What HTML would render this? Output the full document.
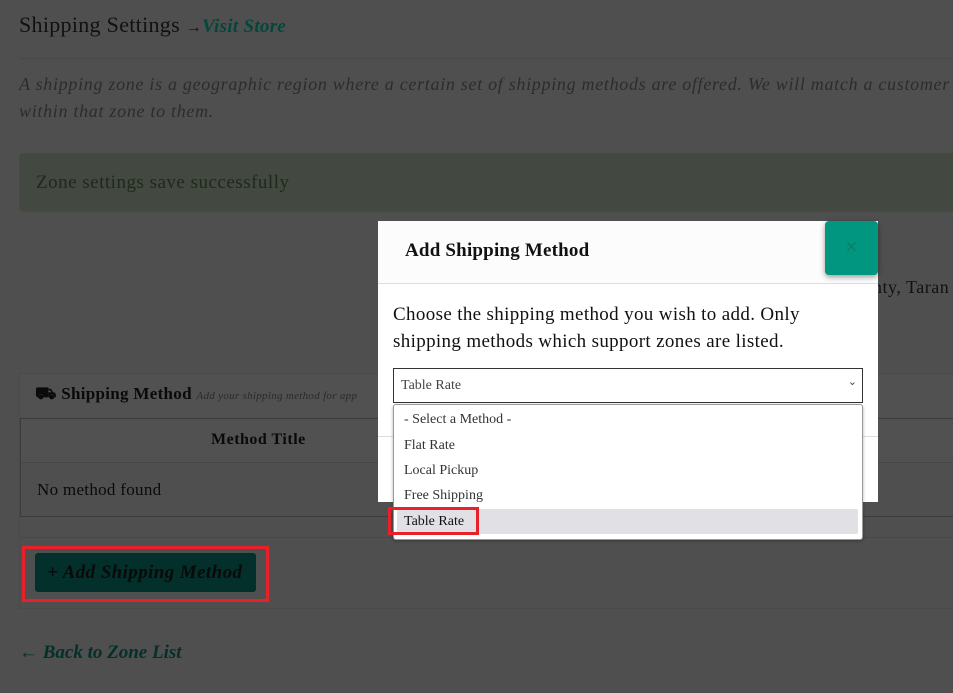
<!DOCTYPE html>
<html><head><style>
*{margin:0;padding:0;box-sizing:border-box}
body{width:953px;height:693px;background:#4f4f4f;position:relative;overflow:hidden;font-family:"Liberation Serif",serif;color:#0a0a0a}
.a{position:absolute;white-space:nowrap}
</style></head><body>
<div class="a" style="left:19px;top:12px;font-size:22px;color:#111;letter-spacing:0.3px">Shipping Settings <span style="font-size:16px">→</span><b style="color:#03473c;font-style:italic;font-size:19px">Visit Store</b></div>
<div class="a" style="left:19px;top:58px;width:934px;height:1px;background:#484848"></div>
<div class="a" style="left:19px;top:71px;font-size:18px;font-style:italic;color:#2c2c2c;line-height:27px;letter-spacing:0.7px">A shipping zone is a geographic region where a certain set of shipping methods are offered. We will match a customer<br>within that zone to them.</div>
<div class="a" style="left:19px;top:153px;width:940px;height:59px;background:#434840;border:1px solid #454b42;border-radius:4px"></div>
<div class="a" style="left:36px;top:172px;font-size:19px;color:#1d2a1a;letter-spacing:0.5px">Zone settings save successfully</div>
<div class="a" style="left:873px;top:277px;font-size:18px;color:#111;letter-spacing:0.5px">nty, Taran</div>
<div class="a" style="left:19px;top:373px;width:940px;height:236px;border:1px solid #4a4a4a;background:#4f4f4f"></div>
<div class="a" style="left:20px;top:374px;width:940px;height:44px;background:#515151"></div>
<div class="a" style="left:35px;top:384px;font-size:17px;font-weight:bold;color:#0a0a0a;letter-spacing:0.3px">&#9951; Shipping Method <span style="font-size:11px;font-weight:normal;font-style:italic;color:#2a2a2a">Add your shipping method for app</span></div>
<div class="a" style="left:20px;top:418px;width:940px;height:99px;border:1px solid #3c3c3c"></div>
<div class="a" style="left:21px;top:419px;width:940px;height:44px;background:#515151;border-bottom:1px solid #474747"></div>
<div class="a" style="left:211px;top:431px;font-size:16px;font-weight:bold;letter-spacing:0.5px">Method Title</div>
<div class="a" style="left:37px;top:480px;font-size:17px;letter-spacing:0.3px">No method found</div>
<div class="a" style="left:20px;top:537px;width:940px;height:1px;background:#484848"></div>
<div class="a" style="left:22px;top:546px;width:247px;height:56px;border:3px solid #e8202a"></div>
<div class="a" style="left:35px;top:553px;width:221px;height:39px;background:#03302a;border-radius:3px;font-size:19px;font-weight:bold;font-style:italic;color:#0a0a0a;padding:9px 0 0 12px;letter-spacing:0.4px">+ Add Shipping Method</div>
<div class="a" style="left:19px;top:642px;font-size:19px;font-weight:bold;font-style:italic;color:#03302a">← Back to Zone List</div>

<div class="a" style="left:378px;top:221px;width:500px;height:281px;background:#fff"></div>
<div class="a" style="left:378px;top:221px;width:500px;height:63px;background:#fcfcfc;border-bottom:1px solid #ddd"></div>
<div class="a" style="left:405px;top:240px;font-size:19px;font-weight:bold;color:#111;letter-spacing:0.2px">Add Shipping Method</div>
<div class="a" style="left:825px;top:221px;width:53px;height:54px;background:#009680;border-radius:4px;box-shadow:0 2px 6px rgba(0,0,0,.4);color:#17775f;font-size:22px;text-align:center;line-height:52px">×</div>
<div class="a" style="left:393px;top:301px;font-size:19px;line-height:27px;color:#111;letter-spacing:0.35px">Choose the shipping method you wish to add. Only<br>shipping methods which support zones are listed.</div>
<div class="a" style="left:393px;top:368px;width:470px;height:35px;border:1px solid #333;background:#fff;font-size:14px;padding:9px 0 0 7px;color:#444">Table Rate<span style="position:absolute;right:5px;top:6px;font-size:11px">&#8964;</span></div>
<div class="a" style="left:378px;top:436px;width:500px;height:1px;background:#ddd"></div>
<div class="a" style="left:393px;top:404px;width:470px;height:136px;background:#fff;border:1px solid #999;border-radius:3px;box-shadow:0 1px 3px rgba(0,0,0,.3);font-size:14px;color:#333"></div>
<div class="a" style="left:404px;top:412px;font-size:14px;color:#333">- Select a Method -</div>
<div class="a" style="left:404px;top:438px;font-size:14px;color:#333">Flat Rate</div>
<div class="a" style="left:404px;top:463px;font-size:14px;color:#333">Local Pickup</div>
<div class="a" style="left:404px;top:488px;font-size:14px;color:#333">Free Shipping</div>
<div class="a" style="left:397px;top:509px;width:461px;height:25px;background:#e1e0e5;border-radius:2px"></div>
<div class="a" style="left:404px;top:514px;font-size:14px;color:#111">Table Rate</div>
<div class="a" style="left:388px;top:507px;width:91px;height:28px;border:3px solid #e8202a"></div>
</body></html>
